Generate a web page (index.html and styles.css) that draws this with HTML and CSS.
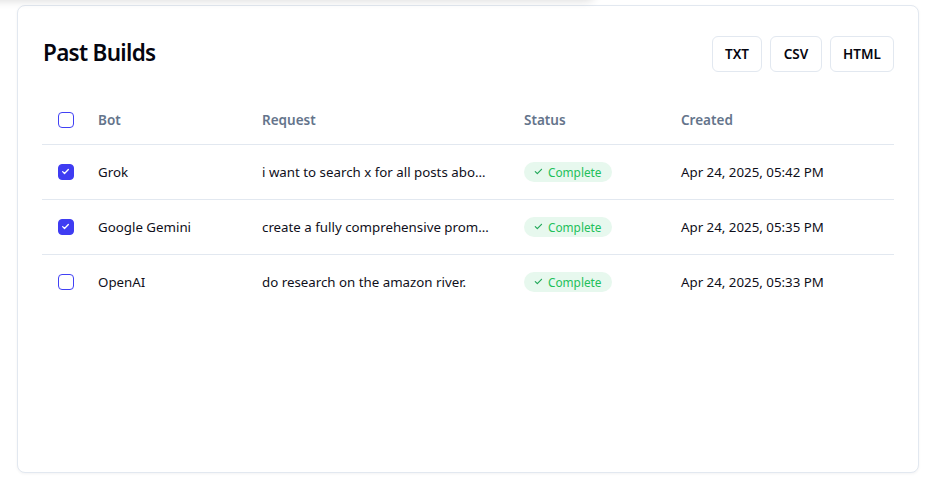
FILE: index.html
```html
<!DOCTYPE html>
<html lang="en">
<head>
<meta charset="utf-8">
<title>Past Builds</title>
<link rel="stylesheet" href="styles.css">
</head>
<body>
<div class="page">
  <div class="top-shadow"></div>
  <section class="card">
    <header class="card-head">
      <h2 class="title">Past Builds</h2>
      <div class="exports">
        <button class="btn btn-txt">TXT</button>
        <button class="btn btn-csv">CSV</button>
        <button class="btn btn-html">HTML</button>
      </div>
    </header>
    <table class="builds">
      <colgroup>
        <col class="c-check"><col class="c-bot"><col class="c-req"><col class="c-status"><col class="c-created">
      </colgroup>
      <thead>
        <tr>
          <th><span class="cb"></span></th>
          <th>Bot</th>
          <th>Request</th>
          <th>Status</th>
          <th>Created</th>
        </tr>
      </thead>
      <tbody>
        <tr>
          <td><span class="cb checked"><svg viewBox="0 0 16 16"><path d="M4.5 8.2l2.3 2.3 4.7-4.9"/></svg></span></td>
          <td>Grok</td>
          <td><span class="req">i want to search x for all posts about grok and summarize them</span></td>
          <td><span class="badge"><svg viewBox="0 0 12 12"><path d="M2.5 6.2l2.2 2.2 4.6-4.8"/></svg>Complete</span></td>
          <td>Apr 24, 2025, 05:42 PM</td>
        </tr>
        <tr>
          <td><span class="cb checked"><svg viewBox="0 0 16 16"><path d="M4.5 8.2l2.3 2.3 4.7-4.9"/></svg></span></td>
          <td>Google Gemini</td>
          <td><span class="req">create a fully comprehensive prompt for a research assistant</span></td>
          <td><span class="badge"><svg viewBox="0 0 12 12"><path d="M2.5 6.2l2.2 2.2 4.6-4.8"/></svg>Complete</span></td>
          <td>Apr 24, 2025, 05:35 PM</td>
        </tr>
        <tr>
          <td><span class="cb"></span></td>
          <td>OpenAI</td>
          <td><span class="req">do research on the amazon river.</span></td>
          <td><span class="badge"><svg viewBox="0 0 12 12"><path d="M2.5 6.2l2.2 2.2 4.6-4.8"/></svg>Complete</span></td>
          <td>Apr 24, 2025, 05:33 PM</td>
        </tr>
      </tbody>
    </table>
  </section>
</div>
</body>
</html>
```
FILE: styles.css
```css
* { box-sizing: border-box; }
html, body { margin: 0; padding: 0; background: #ffffff; }
body {
  font-family: "Noto Sans", "Open Sans", Arial, sans-serif;
  color: #0f0f1a;
}
.page {
  position: relative;
  padding: 5px 32px 0 17px;
  height: 495px;
  overflow: hidden;
}
.top-shadow {
  position: absolute;
  top: -40px;
  left: -20px;
  width: 617px;
  height: 40px;
  border-radius: 12px;
  background: #ffffff;
  box-shadow: 0 1px 8px rgba(0, 0, 0, 0.14);
}
.card {
  width: 902px;
  height: 468px;
  background: #ffffff;
  border: 1px solid #e2e8f0;
  border-radius: 8px;
  box-shadow: 0 1px 3px rgba(15, 23, 42, 0.05);
  padding: 30px 24px 24px 24px;
}
.card-head {
  display: flex;
  align-items: center;
  justify-content: space-between;
  height: 36px;
  margin-bottom: 24px;
}
.title {
  margin: -3px 0 0 0;
  font-size: 22.5px;
  font-weight: 600;
  letter-spacing: -0.7px;
  color: #05050f;
  padding-left: 1px;
}
.exports { display: flex; gap: 8px; }
.btn {
  height: 36px;
  padding: 0;
  border: 1px solid #e2e8f0;
  border-radius: 6px;
  background: #ffffff;
  font-family: inherit;
  font-size: 13.5px;
  font-weight: 600;
  color: #05050f;
  text-align: center;
}
.btn-txt { width: 50px; }
.btn-csv { width: 52px; }
.btn-html { width: 64px; }
.builds {
  width: 852px;
  border-collapse: collapse;
  table-layout: fixed;
}
.c-check { width: 40px; }
.c-bot { width: 164px; }
.c-req { width: 262px; }
.c-status { width: 157px; }
.c-created { width: 229px; }
.builds th {
  height: 48px;
  padding: 0 16px;
  text-align: left;
  font-size: 13.5px;
  font-weight: 600;
  color: #64748b;
  border-bottom: 1px solid #e2e8f0;
  vertical-align: middle;
}
.builds td {
  height: 55px;
  padding: 0 16px;
  font-size: 13.3px;
  color: #0f0f1a;
  border-bottom: 1px solid #e2e8f0;
  vertical-align: middle;
  white-space: nowrap;
}
.builds tbody tr:last-child td { border-bottom: none; }
.builds th:first-child, .builds td:first-child { padding: 0 0 0 16px; }
.cb {
  display: block;
  width: 16px;
  height: 16px;
  border: 1.3px solid #4141f5;
  border-radius: 4px;
  background: #ffffff;
}
.cb.checked {
  background: #3f3cf2;
  border-color: #3f3cf2;
}
.cb svg {
  display: block;
  width: 13px;
  height: 13px;
  fill: none;
  stroke: #ffffff;
  stroke-width: 1.6;
  stroke-linecap: round;
  stroke-linejoin: round;
}
.req {
  display: block;
  max-width: 234px;
  overflow: hidden;
  text-overflow: ellipsis;
}
.badge {
  display: inline-flex;
  align-items: center;
  gap: 4px;
  height: 20px;
  padding: 0 10px 0 9px;
  border-radius: 10px;
  background: #e7f8ee;
  color: #22c05a;
  font-size: 11.8px;
}
.badge svg {
  width: 11px;
  height: 11px;
  fill: none;
  stroke: #22a85a;
  stroke-width: 1.3;
  stroke-linecap: round;
  stroke-linejoin: round;
}
```
